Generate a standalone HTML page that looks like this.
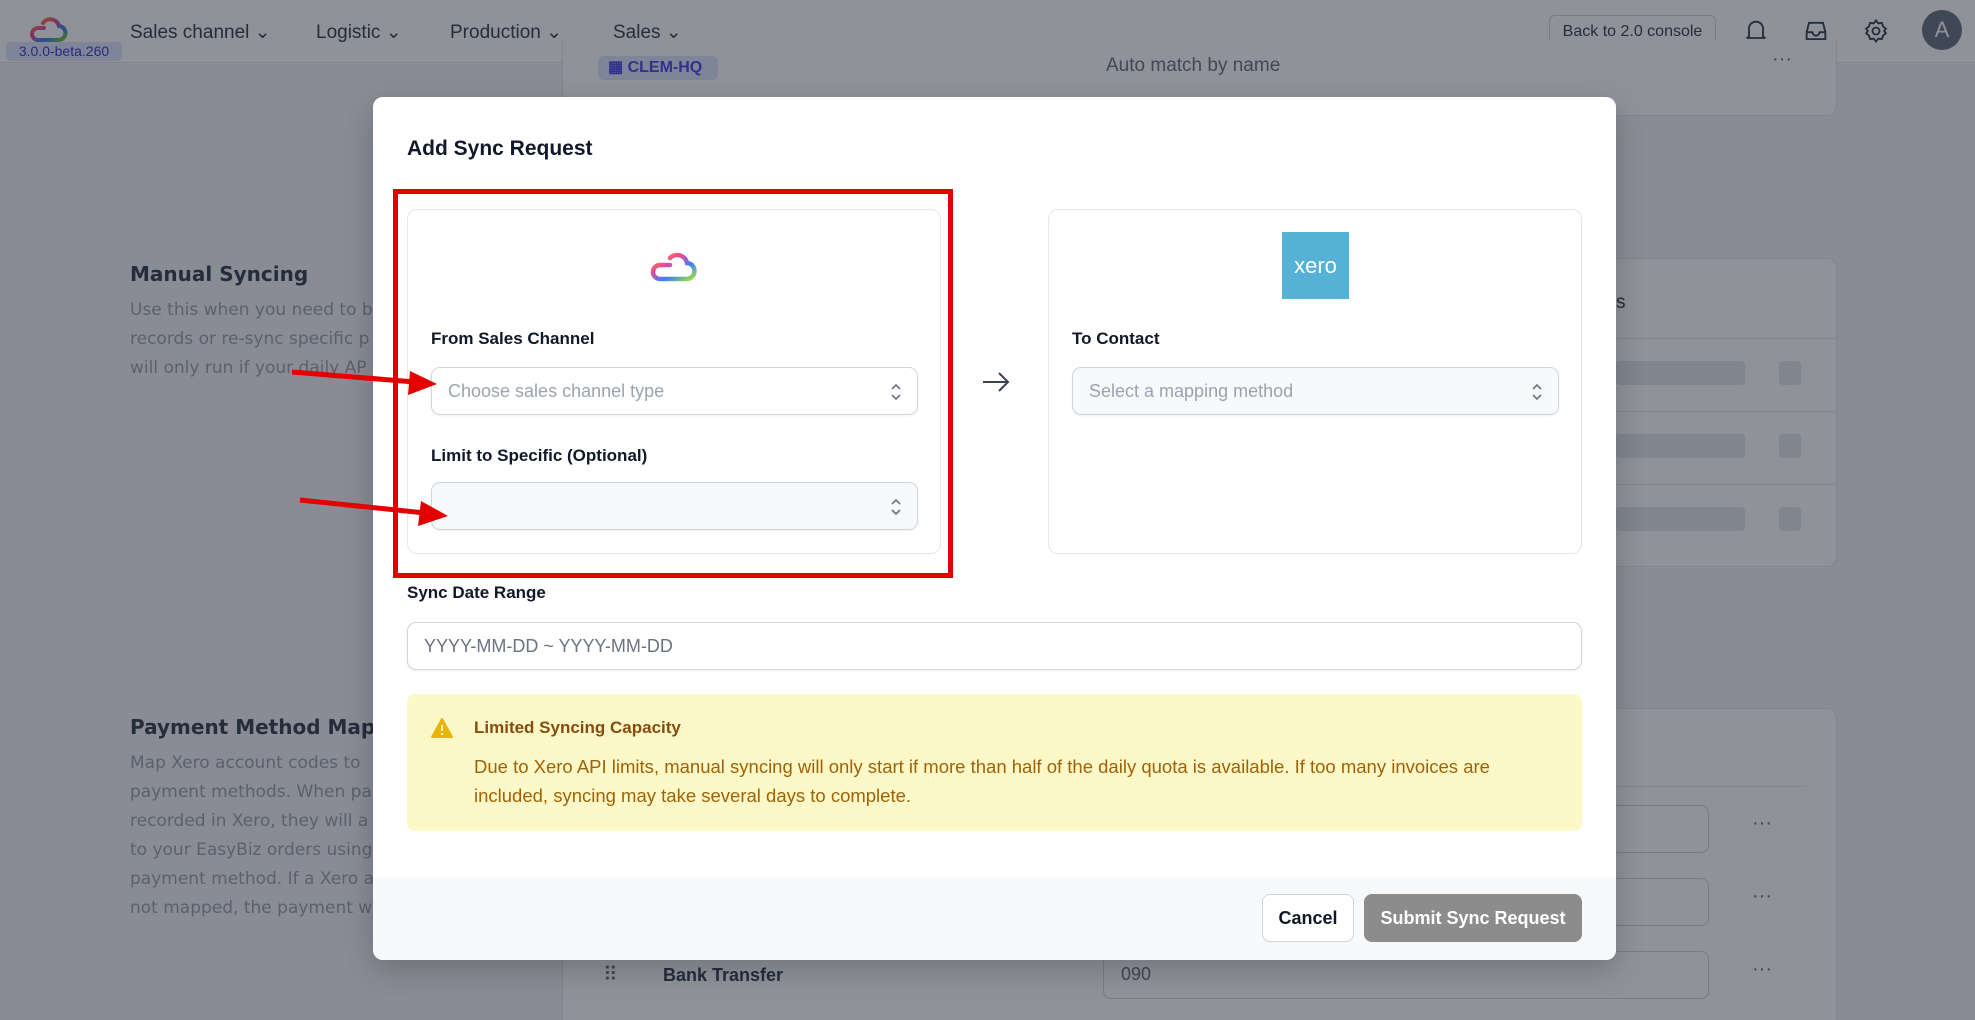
<!DOCTYPE html>
<html style="overflow:hidden;width:1975px;height:1020px"><head><meta charset="utf-8"><style>
*{box-sizing:border-box;margin:0;padding:0}
body{width:1975px;height:1020px;overflow:hidden;background:#f3f4f6;font-family:"Liberation Sans",sans-serif;position:relative;color:#111827}
.a{position:absolute}
.nav{left:0;top:0;width:1975px;height:63px;background:#fff;border-bottom:1px solid #e5e7eb}
.ni{top:21px;font-size:19px;color:#374151}
.bg{font-family:"DejaVu Sans",sans-serif}
.card{background:#fff;border:1px solid #e5e7eb;border-radius:10px}
.overlay{left:0;top:0;width:1975px;height:1020px;background:rgba(17,24,39,0.47)}
.modal{left:373px;top:97px;width:1243px;height:863px;background:#fff;border-radius:10px;overflow:hidden;box-shadow:0 10px 30px rgba(0,0,0,.2)}
.lbl{font-size:17px;font-weight:bold;color:#111827}
.sel{border:1px solid #d1d5db;border-radius:9px;height:48px;box-shadow:0 1px 2px rgba(0,0,0,.06)}
.ph{font-size:18px;color:#9ca3af;position:absolute;left:16px;top:13px}
.chev{position:absolute;right:14px;top:12px}
.skel{background:#e5e7eb;border-radius:4px}
</style></head><body>
<div class="a nav"></div>
<svg class="a" style="left:22px;top:14px" width="52" height="32" viewBox="0 0 52 32"><defs><linearGradient id="g0" x1="0" y1="0" x2="1" y2="1"><stop offset="0" stop-color="#f59e0b"/><stop offset=".4" stop-color="#ec4899"/><stop offset=".7" stop-color="#3b82f6"/><stop offset="1" stop-color="#84cc16"/></linearGradient></defs><path d="M22 14h-6a6 6 0 0 0 0 12h20a7 7 0 0 0 1-14a9 9 0 0 0-16-3" fill="none" stroke="url(#g0)" stroke-width="4" stroke-linecap="round"/></svg>
<div class="a" style="left:6px;top:42px;width:116px;height:19px;background:#e0e7ff;border-radius:5px;font-size:14px;color:#4338ca;text-align:center;line-height:19px">3.0.0-beta.260</div>
<div class="a ni" style="left:130px">Sales channel ⌄</div>
<div class="a ni" style="left:316px">Logistic ⌄</div>
<div class="a ni" style="left:450px">Production ⌄</div>
<div class="a ni" style="left:613px">Sales ⌄</div>
<div class="a" style="left:1549px;top:15px;width:167px;height:34px;border:1px solid #d1d5db;border-radius:6px;font-size:16px;color:#374151;text-align:center;line-height:32px">Back to 2.0 console</div>
<svg class="a" style="left:1742px;top:17px" width="28" height="28" viewBox="0 0 24 24" fill="none" stroke="#374151" stroke-width="1.6"><path d="M6 17V10a6 6 0 0 1 12 0v7l2 1H4zM10 20a2 2 0 0 0 4 0"/></svg>
<svg class="a" style="left:1802px;top:17px" width="28" height="28" viewBox="0 0 24 24" fill="none" stroke="#374151" stroke-width="1.6"><path d="M4 13l2-8h12l2 8v6H4zM4 13h5a3 3 0 0 0 6 0h5"/></svg>
<svg class="a" style="left:1862px;top:17px" width="28" height="28" viewBox="0 0 24 24" fill="none" stroke="#374151" stroke-width="1.6"><circle cx="12" cy="12" r="3"/><path d="M12 3l2 2.5 3-.5 1 3 2.5 2-1.5 2 1.5 2-2.5 2-1 3-3-.5-2 2.5-2-2.5-3 .5-1-3L3.5 14 5 12 3.5 10 6 8l1-3 3 .5z"/></svg>
<div class="a" style="left:1922px;top:10px;width:40px;height:40px;border-radius:50%;background:#6b7280;color:#fff;font-size:22px;text-align:center;line-height:40px">A</div>

<div class="a card" style="left:562px;top:40px;width:1275px;height:76px;border-top:none;border-radius:0 0 10px 10px"></div>
<div class="a" style="left:598px;top:56px;width:120px;height:24px;background:#e0e7ff;border-radius:6px;color:#4f46e5;font-size:16px;font-weight:bold;line-height:24px;padding-left:10px">▦ CLEM-HQ</div>
<div class="a" style="left:1106px;top:55px;font-size:19px;color:#6b7280">Auto match by name</div>
<div class="a" style="left:1772px;top:48px;font-size:20px;color:#6b7280">···</div>

<div class="a bg" style="left:130px;top:262px;font-size:20px;font-weight:bold;color:#374151">Manual Syncing</div>
<div class="a bg" style="left:130px;top:296px;font-size:17px;line-height:29px;color:#9ca3af;width:260px;white-space:nowrap;overflow:hidden">Use this when you need to b<br>records or re-sync specific p<br>will only run if your daily AP</div>
<div class="a card" style="left:562px;top:258px;width:1275px;height:309px"></div>
<div class="a" style="left:1616px;top:292px;font-size:19px;color:#374151">s</div>
<div class="a" style="left:1616px;top:338px;width:221px;height:1px;background:#e5e7eb"></div>
<div class="a skel" style="left:1616px;top:361px;width:129px;height:24px"></div><div class="a skel" style="left:1779px;top:361px;width:22px;height:24px"></div>
<div class="a" style="left:1616px;top:411px;width:221px;height:1px;background:#e5e7eb"></div>
<div class="a skel" style="left:1616px;top:434px;width:129px;height:24px"></div><div class="a skel" style="left:1779px;top:434px;width:22px;height:24px"></div>
<div class="a" style="left:1616px;top:484px;width:221px;height:1px;background:#e5e7eb"></div>
<div class="a skel" style="left:1616px;top:507px;width:129px;height:24px"></div><div class="a skel" style="left:1779px;top:507px;width:22px;height:24px"></div>

<div class="a bg" style="left:130px;top:715px;font-size:20px;font-weight:bold;color:#374151">Payment Method Mapping</div>
<div class="a bg" style="left:130px;top:749px;font-size:17px;line-height:29px;color:#9ca3af;white-space:nowrap">Map Xero account codes to<br>payment methods. When pa<br>recorded in Xero, they will a<br>to your EasyBiz orders using<br>payment method. If a Xero a<br>not mapped, the payment w</div>
<div class="a card" style="left:562px;top:708px;width:1275px;height:312px;border-bottom:none;border-radius:10px 10px 0 0"></div>
<div class="a" style="left:1616px;top:786px;width:190px;height:1px;background:#e5e7eb"></div>
<div class="a" style="left:1103px;top:805px;width:606px;height:48px;border:1px solid #d1d5db;border-radius:8px;background:#fff"></div>
<div class="a" style="left:1103px;top:878px;width:606px;height:48px;border:1px solid #d1d5db;border-radius:8px;background:#fff"></div>
<div class="a" style="left:1103px;top:951px;width:606px;height:48px;border:1px solid #d1d5db;border-radius:8px;background:#fff"></div>
<div class="a" style="left:1121px;top:964px;font-size:18px;color:#6b7280">090</div>
<div class="a" style="left:1752px;top:812px;font-size:20px;color:#6b7280">···</div>
<div class="a" style="left:1752px;top:885px;font-size:20px;color:#6b7280">···</div>
<div class="a" style="left:1752px;top:958px;font-size:20px;color:#6b7280">···</div>
<div class="a" style="left:603px;top:962px;font-size:20px;color:#6b7280">⠿</div>
<div class="a" style="left:663px;top:965px;font-size:18px;font-weight:bold;color:#374151">Bank Transfer</div>

<div class="a overlay"></div>

<div class="a modal">
  <div class="a" style="left:34px;top:40px;font-size:21px;font-weight:bold;color:#111827">Add Sync Request</div>
  <div class="a card" style="left:34px;top:112px;width:534px;height:345px">
    <svg class="a" style="left:240px;top:36px" width="52" height="38" viewBox="0 0 52 38"><defs><linearGradient id="g1" x1="0" y1="0" x2="1" y2="1"><stop offset="0" stop-color="#f59e0b"/><stop offset=".35" stop-color="#ec4899"/><stop offset=".65" stop-color="#3b82f6"/><stop offset="1" stop-color="#a3e635"/></linearGradient></defs><path d="M22 19h-10a7 7 0 0 0 0 14h26a8 8 0 0 0 1-16a10 10 0 0 0-17-5" fill="none" stroke="url(#g1)" stroke-width="4.5" stroke-linecap="round"/></svg>
    <div class="a lbl" style="left:23px;top:119px">From Sales Channel</div>
    <div class="a sel" style="left:23px;top:157px;width:487px;background:#fff"><span class="ph">Choose sales channel type</span><svg class="chev" width="14" height="24" viewBox="0 0 14 24" fill="none" stroke="#6b7280" stroke-width="1.6"><path d="M3 9l4-4 4 4M3 15l4 4 4-4"/></svg></div>
    <div class="a lbl" style="left:23px;top:236px">Limit to Specific (Optional)</div>
    <div class="a sel" style="left:23px;top:272px;width:487px;background:#f8f9fb"><svg class="chev" width="14" height="24" viewBox="0 0 14 24" fill="none" stroke="#6b7280" stroke-width="1.6"><path d="M3 9l4-4 4 4M3 15l4 4 4-4"/></svg></div>
  </div>
  <svg class="a" style="left:608px;top:273px" width="30" height="24" viewBox="0 0 30 24" fill="none" stroke="#374151" stroke-width="2"><path d="M2 12h25M18 3l9 9-9 9"/></svg>
  <div class="a card" style="left:675px;top:112px;width:534px;height:345px">
    <div class="a" style="left:233px;top:22px;width:67px;height:67px;background:#55b1d6;color:#fff;font-size:22px;text-align:center;line-height:67px">xero</div>
    <div class="a lbl" style="left:23px;top:119px">To Contact</div>
    <div class="a sel" style="left:23px;top:157px;width:487px;background:#f8f9fb"><span class="ph">Select a mapping method</span><svg class="chev" width="14" height="24" viewBox="0 0 14 24" fill="none" stroke="#6b7280" stroke-width="1.6"><path d="M3 9l4-4 4 4M3 15l4 4 4-4"/></svg></div>
  </div>
  <div class="a lbl" style="left:34px;top:486px">Sync Date Range</div>
  <div class="a sel" style="left:34px;top:525px;width:1175px;background:#fff"><span class="ph" style="color:#6b7280">YYYY-MM-DD ~ YYYY-MM-DD</span></div>
  <div class="a" style="left:34px;top:597px;width:1175px;height:137px;background:#fdf8c8;border-radius:8px">
    <svg class="a" style="left:24px;top:24px" width="22" height="20" viewBox="0 0 22 20"><path d="M11 1L21 19H1z" fill="#eab308" stroke="#eab308" stroke-linejoin="round" stroke-width="2"/><rect x="10" y="7" width="2" height="6" fill="#fdf8c8"/><rect x="10" y="15" width="2" height="2" fill="#fdf8c8"/></svg>
    <div class="a" style="left:67px;top:24px;font-size:17px;font-weight:bold;color:#854d0e">Limited Syncing Capacity</div>
    <div class="a" style="left:67px;top:58px;font-size:18.5px;line-height:29px;color:#a16207;width:1060px">Due to Xero API limits, manual syncing will only start if more than half of the daily quota is available. If too many invoices are included, syncing may take several days to complete.</div>
  </div>
  <div class="a" style="left:0;top:780px;width:1243px;height:83px;background:#f8f9fb">
    <div class="a" style="left:889px;top:17px;width:92px;height:48px;background:#fff;border:1px solid #d1d5db;border-radius:8px;font-size:18px;font-weight:bold;text-align:center;line-height:46px;color:#111827">Cancel</div>
    <div class="a" style="left:991px;top:17px;width:218px;height:48px;background:#8c8c8c;border-radius:8px;font-size:18px;font-weight:bold;text-align:center;line-height:48px;color:#fff">Submit Sync Request</div>
  </div>
</div>

<div class="a" style="left:393px;top:189px;width:560px;height:389px;border:5px solid #e50000"></div>
<svg class="a" style="left:0;top:0" width="1975" height="1020"><g fill="#e50000" stroke="#e50000"><line x1="292" y1="372" x2="415" y2="382" stroke-width="5"/><path d="M437 384L410 371L408 395z" stroke="none"/><line x1="300" y1="500" x2="425" y2="513" stroke-width="5"/><path d="M448 516L421 501L418 526z" stroke="none"/></g></svg>
</body></html>
